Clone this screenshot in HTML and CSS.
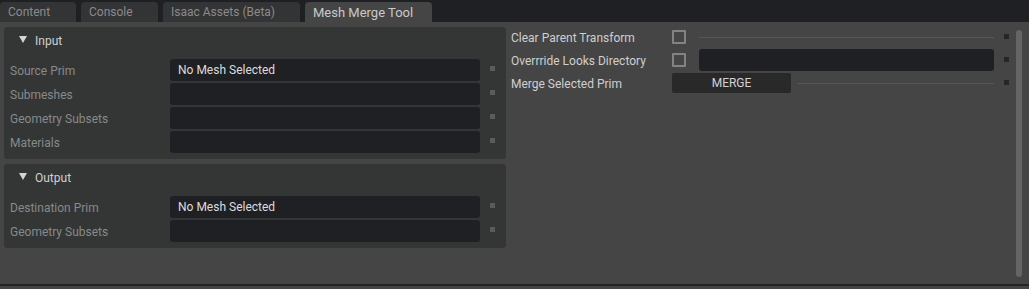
FILE: index.html
```html
<!DOCTYPE html>
<html>
<head>
<meta charset="utf-8">
<link rel="stylesheet" href="styles.css">
</head>
<body>
<div class="tabbar">
  <div class="tab t1">Content</div>
  <div class="tab t2">Console</div>
  <div class="tab t3">Isaac Assets (Beta)</div>
  <div class="tab t4 active">Mesh Merge Tool</div>
</div>
<div class="main">
  <div class="leftcol">
    <div class="frame">
      <div class="fhead"><span class="tri"></span>Input</div>
      <div class="rows">
        <div class="row"><span class="lbl">Source Prim</span><span class="field">No Mesh Selected</span><span class="mk"></span></div>
        <div class="row"><span class="lbl">Submeshes</span><span class="field"></span><span class="mk"></span></div>
        <div class="row"><span class="lbl">Geometry Subsets</span><span class="field"></span><span class="mk"></span></div>
        <div class="row"><span class="lbl">Materials</span><span class="field"></span><span class="mk"></span></div>
      </div>
    </div>
    <div class="frame">
      <div class="fhead"><span class="tri"></span>Output</div>
      <div class="rows">
        <div class="row"><span class="lbl">Destination Prim</span><span class="field">No Mesh Selected</span><span class="mk"></span></div>
        <div class="row"><span class="lbl">Geometry Subsets</span><span class="field"></span><span class="mk"></span></div>
      </div>
    </div>
  </div>
  <div class="rightcol">
    <div class="rrow r1"><span class="rlbl">Clear Parent Transform</span><span class="cb"></span><span class="line"></span><span class="rmk"></span></div>
    <div class="rrow r2"><span class="rlbl">Overrride Looks Directory</span><span class="cb"></span><span class="rfield"></span><span class="rmk"></span></div>
    <div class="rrow r3"><span class="rlbl">Merge Selected Prim</span><span class="btn">MERGE</span><span class="line l2"></span><span class="rmk"></span></div>
  </div>
  <div class="scroll"><div class="thumb"></div></div>
</div>
<div class="bottom"></div>
</body>
</html>
```
FILE: styles.css
```css
html, body {
  margin: 0;
  padding: 0;
}
body {
  width: 1029px;
  height: 289px;
  overflow: hidden;
  background: #454545;
  font-family: Roboto, "Liberation Sans", sans-serif;
  font-size: 12px;
  color: #cfcfcf;
}
.tabbar {
  height: 22px;
  background: #1f2023;
  display: flex;
  align-items: flex-end;
  gap: 5px;
}
.tab {
  height: 20px;
  line-height: 21px;
  box-sizing: border-box;
  padding-left: 8px;
  background: #333435;
  color: #8b8b8b;
  border-radius: 4px 4px 0 0;
  white-space: nowrap;
}
.t1 { width: 76px; }
.t2 { width: 77px; }
.t3 { width: 137px; }
.t4 { width: 127px; }
.tab.active {
  background: #454545;
  color: #c9c9c9;
  font-size: 13px;
}
.main {
  height: 262px;
  display: flex;
  padding-left: 4px;
}
.leftcol {
  width: 502px;
  padding-top: 5px;
  display: flex;
  flex-direction: column;
  gap: 5px;
}
.frame {
  background: #343635;
  border-radius: 3px;
  padding-bottom: 6px;
}
.fhead {
  height: 28px;
  line-height: 28px;
  display: flex;
  align-items: center;
  color: #d0d0d0;
  font-size: 12px;
}
.tri {
  width: 0;
  height: 0;
  border-left: 4px solid transparent;
  border-right: 4px solid transparent;
  border-top: 7px solid #d4d4d4;
  margin-left: 15px;
  margin-right: 8px;
  margin-top: -3px;
}
.rows {
  margin-top: 4px;
  display: flex;
  flex-direction: column;
  gap: 2px;
}
.row {
  height: 22px;
  display: flex;
  align-items: center;
}
.lbl {
  width: 160px;
  padding-left: 6px;
  padding-top: 1px;
  color: #868a8a;
}
.field {
  width: 310px;
  height: 22px;
  line-height: 23px;
  box-sizing: border-box;
  padding-left: 8px;
  background: #1f2023;
  border-radius: 3px;
  color: #dcdcdc;
}
.mk {
  width: 5px;
  height: 5px;
  margin-left: 10px;
  margin-top: -3px;
  background: #5a5c5c;
}
.rightcol {
  margin-left: 5px;
  padding-top: 4px;
  width: 498px;
  display: flex;
  flex-direction: column;
}
.rrow {
  height: 22px;
  display: flex;
  align-items: center;
}
.r2, .r3 { margin-top: 1px; }
.rlbl {
  width: 161px;
  padding-top: 1px;
  color: #cfcfcf;
  white-space: nowrap;
}
.cb {
  width: 14px;
  height: 14px;
  box-sizing: border-box;
  border: 2px solid #838383;
  border-radius: 1px;
  margin-right: 13px;
}
.line {
  width: 295px;
  height: 1px;
  background: #565656;
}
.l2 {
  margin-left: 6px;
  width: 197px;
}
.rfield {
  width: 295px;
  height: 22px;
  background: #1f2023;
  border-radius: 3px;
}
.btn {
  width: 119px;
  height: 20px;
  line-height: 21px;
  text-align: center;
  background: #292929;
  border-radius: 2px;
  color: #d2d2d2;
}
.rmk {
  width: 5px;
  height: 5px;
  margin-left: 10px;
  margin-top: -1px;
  background: #262626;
}
.scroll {
  margin-left: 7px;
  padding-top: 8px;
}
.thumb {
  width: 6px;
  height: 247px;
  background: #656565;
  border-radius: 3px;
}
.bottom {
  height: 2px;
  background: #27231f;
}
```
